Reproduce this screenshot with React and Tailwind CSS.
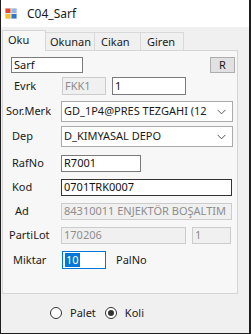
import React from 'react'

function AppIcon() {
  return (
    <svg width="12" height="11" viewBox="0 0 12 11">
      <rect x="0" y="0" width="12" height="11" fill="#e9e9e9" />
      <rect x="0.5" y="0.5" width="5" height="4.5" fill="#e2462b" />
      <rect x="6.5" y="0.5" width="5" height="4.5" fill="#8fb8e8" />
      <rect x="0.5" y="6" width="5" height="4.5" fill="#f5c12e" />
      <rect x="6.5" y="6" width="5" height="4.5" fill="#2f74d0" />
    </svg>
  )
}

function TextBox({ value, w, disabled, dark, h = 'h-[17px]' }) {
  return (
    <div
      className={`${w} ${h} flex items-center px-[2px] border whitespace-nowrap overflow-hidden ${
        disabled
          ? 'bg-[#f0f0f0] border-[#cccccc] text-[#8d8d8d]'
          : dark
          ? 'bg-white border-[#333333] text-[#111]'
          : 'bg-white border-[#7a7a7a] text-[#111]'
      }`}
    >
      {value}
    </div>
  )
}

function Combo({ value }) {
  return (
    <div className="w-[172px] h-[21px] flex items-center border border-[#a9a9a9] bg-white pl-[2px] pr-[6px]">
      <span className="flex-1 whitespace-nowrap overflow-hidden">{value}</span>
      <svg width="9" height="6" viewBox="0 0 9 6">
        <path d="M0.5 0.8 L4.5 4.8 L8.5 0.8" fill="none" stroke="#555" strokeWidth="1" />
      </svg>
    </div>
  )
}

function Radio({ label, checked }) {
  return (
    <div className="flex items-center">
      <div className="w-[12px] h-[12px] rounded-full border border-[#333] bg-white flex items-center justify-center">
        {checked && <div className="w-[6px] h-[6px] rounded-full bg-[#333]" />}
      </div>
      <span className="ml-[8px]">{label}</span>
    </div>
  )
}

export default function App() {
  const tabs = [
    { label: 'Okunan', w: 'w-[49px]', pl: 'pl-[4px]' },
    { label: 'Cikan', w: 'w-[46px]', pl: 'pl-[6px]' },
    { label: 'Giren', w: 'w-[43px]', pl: 'pl-[6px]' },
  ]

  return (
    <div
      className="w-[251px] h-[334px] bg-[#f0f0f0] border-l border-r-2 border-b border-[#1e1e1e] text-[11px] text-[#1a1a1a] flex flex-col"
      style={{ fontFamily: '"Noto Sans", "Open Sans", sans-serif' }}
    >
      {/* title bar */}
      <div className="h-[27px] bg-white flex items-center pl-[4px]">
        <AppIcon />
        <span className="ml-[10px] text-[12px]">C04_Sarf</span>
      </div>

      <div className="pl-[1px] pt-[3px]">
        {/* tab headers */}
        <div className="flex items-end h-[20px]">
          <div className="w-[44px] h-[21px] bg-[#f7f7f7] border border-b-0 border-[#d6d6d6] pl-[5px] pt-[1px] relative z-10 mb-[-1px]">
            Oku
          </div>
          {tabs.map((t) => (
            <div
              key={t.label}
              className={`${t.w} h-[18px] bg-[#f0f0f0] border border-l-0 border-b-0 border-[#d9d9d9] ${t.pl} pt-[1px]`}
            >
              {t.label}
            </div>
          ))}
        </div>

        {/* tab page */}
        <div className="w-[236px] h-[244px] bg-[#f7f7f7] border border-[#d6d6d6] pt-[6px]">
          <div className="flex items-center h-[16px]">
            <div className="ml-[8px]">
              <TextBox value="Sarf" w="w-[72px]" h="h-[16px]" />
            </div>
            <div className="ml-auto mr-[2px] w-[25px] h-[16px] bg-[#e1e1e1] border border-[#adadad] flex items-center justify-center">
              R
            </div>
          </div>

          <div className="flex items-center h-[18px] mt-[4px]">
            <span className="w-[58px] pl-[11px]">Evrk</span>
            <div className="ml-[1px]">
              <TextBox value="FKK1" w="w-[44px]" h="h-[18px]" disabled />
            </div>
            <div className="ml-[6px]">
              <TextBox value="1" w="w-[74px]" h="h-[18px]" />
            </div>
          </div>

          <div className="flex items-center h-[21px] mt-[6px]">
            <span className="w-[58px] pl-[3px]">Sor.Merk</span>
            <Combo value="GD_1P4@PRES TEZGAHI (12" />
          </div>

          <div className="flex items-center h-[21px] mt-[4px]">
            <span className="w-[58px] pl-[9px]">Dep</span>
            <Combo value="D_KIMYASAL DEPO" />
          </div>

          <div className="flex items-center h-[17px] mt-[8px]">
            <span className="w-[58px] pl-[9px]">RafNo</span>
            <TextBox value="R7001" w="w-[80px]" />
          </div>

          <div className="flex items-center h-[17px] mt-[7px]">
            <span className="w-[58px] pl-[9px]">Kod</span>
            <TextBox value="0701TRK0007" w="w-[171px]" dark />
          </div>

          <div className="flex items-center h-[17px] mt-[7px]">
            <span className="w-[58px] pl-[12px]">Ad</span>
            <TextBox value="84310011 ENJEKTÖR BOŞALTIM" w="w-[171px]" disabled />
          </div>

          <div className="flex items-center h-[17px] mt-[7px]">
            <span className="w-[58px] pl-[6px]">PartiLot</span>
            <TextBox value="170206" w="w-[125px]" disabled />
            <div className="ml-[6px]">
              <TextBox value="1" w="w-[39px]" disabled />
            </div>
          </div>

          <div className="flex items-center h-[18px] mt-[7px]">
            <span className="w-[58px] pl-[10px]">Miktar</span>
            <div className="ml-[1px] w-[44px] h-[18px] bg-white border border-[#0078d7] flex items-center pl-[2px]">
              <span className="bg-[#0078d7] text-white px-[1px] leading-[14px]">10</span>
            </div>
            <span className="ml-[10px]">PalNo</span>
          </div>
        </div>

        {/* radios */}
        <div className="flex items-center h-[38px] pl-[48px] gap-[9px]">
          <Radio label="Palet" />
          <Radio label="Koli" checked />
        </div>
      </div>
    </div>
  )
}
